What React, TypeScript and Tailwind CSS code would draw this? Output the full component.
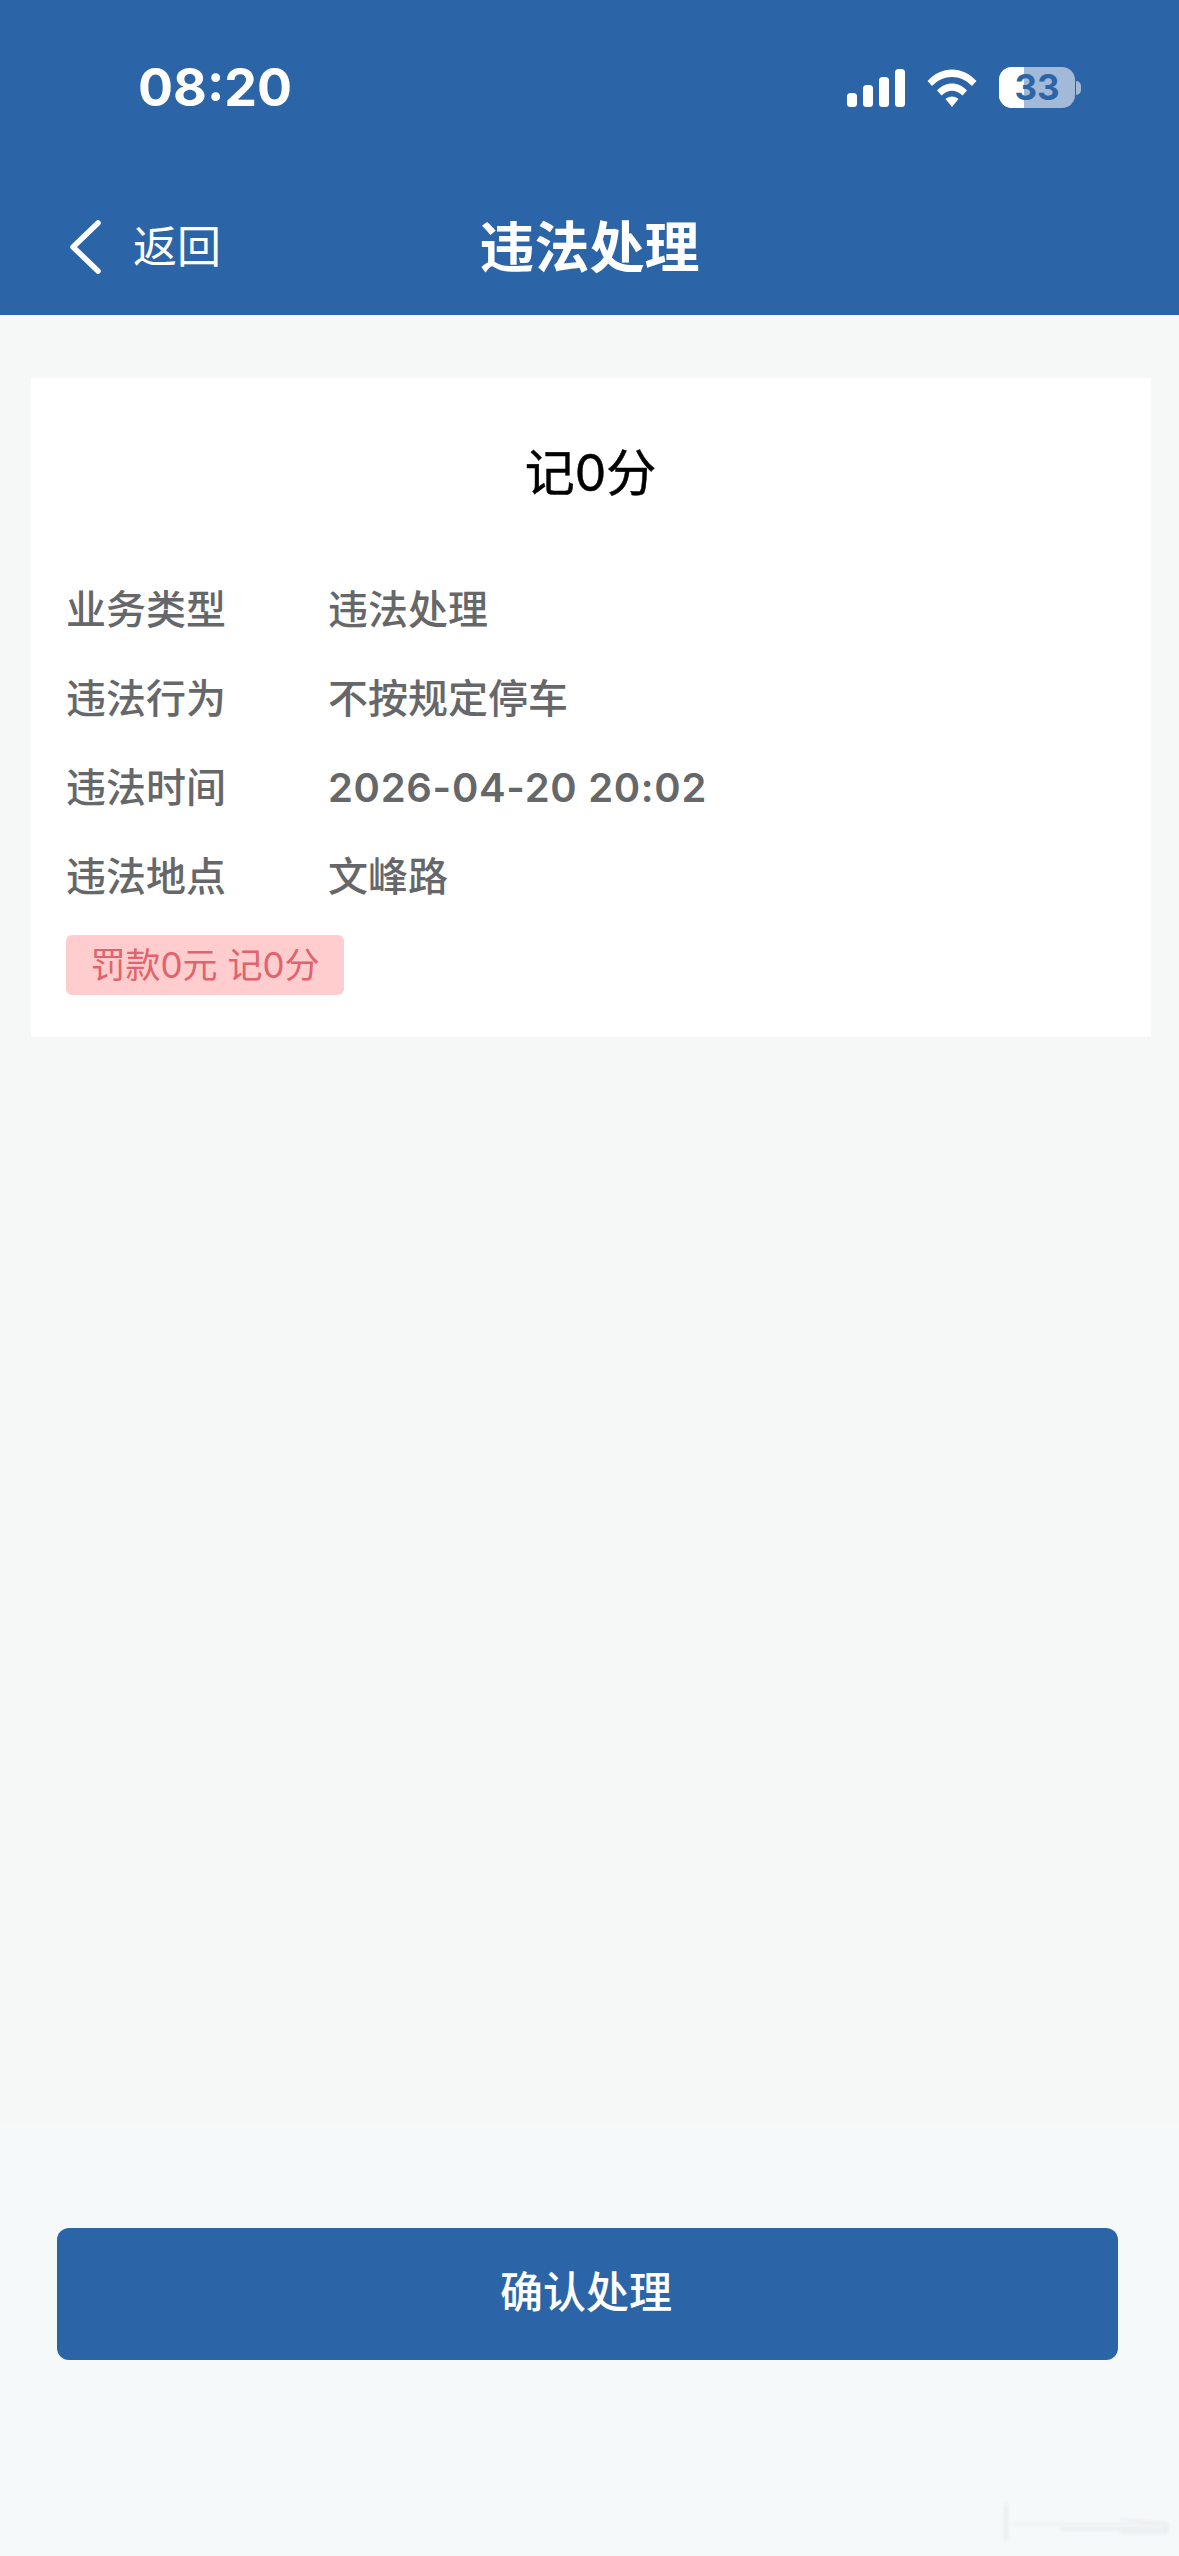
const font = "font-['Inter','Noto_Sans_CJK_SC',sans-serif]";

const rows = [
  ["业务类型", "违法处理", ""],
  ["违法行为", "不按规定停车", ""],
  ["违法时间", "2026-04-20 20:02", "font-semibold tracking-[0.7px]"],
  ["违法地点", "文峰路", ""],
];

function Signal() {
  return (
    <svg width="58" height="38" viewBox="0 0 58 38" fill="#fff">
      <rect x="0" y="24" width="10" height="14" rx="3.5" />
      <rect x="16" y="16" width="10" height="22" rx="3.5" />
      <rect x="32" y="8" width="10" height="30" rx="3.5" />
      <rect x="48" y="0" width="10" height="38" rx="3.5" />
    </svg>
  );
}

function Wifi() {
  return (
    <svg width="50" height="38" viewBox="0 0 50 38" fill="#fff">
      <path d="M0.5 12 C14 -3.5 36 -3.5 49.5 12 L45 17 C33.5 5 16.5 5 5 17 Z" />
      <path d="M10 21.5 C18.5 12 31.5 12 40 21.5 L35.5 26.5 C29 20 21 20 14.5 26.5 Z" />
      <path d="M18.5 30 C22 26.5 28 26.5 31.5 30 L25 38 Z" />
    </svg>
  );
}

function Battery() {
  return (
    <div className="flex items-center">
      <div className="relative w-[76px] h-[41px] rounded-[13px] overflow-hidden bg-[#a3b9d8] flex">
        <div className="w-[25px] h-full bg-white" />
        <span className="absolute inset-0 flex items-center justify-center text-[35px] leading-none font-bold text-[#2c65a7]">
          33
        </span>
      </div>
      <div className="w-[5px] h-[14px] ml-[1px] rounded-r-full bg-[#a3b9d8]" />
    </div>
  );
}

function Watermark() {
  return (
    <svg className="absolute right-0 bottom-0 blur-[1.5px]" width="179" height="56" viewBox="0 0 179 56" fill="none">
      <path d="M6 4 V40" stroke="#e6e9ea" strokeWidth="4" opacity="0.7" />
      <path d="M14 24 H166" stroke="#e8ebec" strokeWidth="3" opacity="0.6" />
      <path d="M60 29 H168" stroke="#e4e7e8" strokeWidth="3" opacity="0.7" />
      <path d="M120 19 L168 24 L166 33 L120 33" stroke="#e2e5e6" strokeWidth="2" opacity="0.6" />
    </svg>
  );
}

export default function App() {
  return (
    <div className={`w-[1179px] h-[2556px] flex flex-col bg-[#f6f7f7] overflow-hidden ${font}`}>
      <header className="h-[315px] bg-[#2c65a7] text-white flex flex-col shrink-0">
        <div className="flex items-center justify-between pt-[67px] pl-[138px] pr-[98px]">
          <span className="text-[52px] leading-[41px] font-bold">08:20</span>
          <div className="flex items-center gap-[22px]">
            <Signal />
            <Wifi />
            <Battery />
          </div>
        </div>
        <div className="grid grid-cols-[1fr_auto_1fr] items-center px-[69px] mt-[112px]">
          <div className="flex items-center gap-[32px]">
            <svg width="32" height="54" viewBox="0 0 32 54" fill="none" stroke="#fff" strokeWidth="5.5" strokeLinecap="round" strokeLinejoin="round">
              <path d="M29 3 L4 27 L29 51" />
            </svg>
            <span className="text-[44px] leading-[54px]">返回</span>
          </div>
          <h1 className="text-[55px] leading-[54px] font-bold text-center whitespace-nowrap">违法处理</h1>
          <div />
        </div>
      </header>

      <main className="flex-1 pl-[31px] pr-[28px] pt-[63px]">
        <section className="h-[659px] bg-white pl-[35px] pr-[36px] pt-[63px] flex flex-col">
          <h2 className="text-[50px] leading-[64px] font-normal text-black text-center [-webkit-text-stroke:0.5px_#000]">记0分</h2>
          <div className="mt-[73px] flex flex-col gap-[25px]">
            {rows.map(([k, v, extra]) => (
              <div key={k} className="flex items-center h-[64px] text-[40px] leading-[64px] font-medium text-[#666769]">
                <span className="w-[262px] shrink-0">{k}</span>
                <span className={extra}>{v}</span>
              </div>
            ))}
          </div>
          <div className="mt-[26px] w-[278px] h-[60px] rounded-[6px] bg-[#ffcdcd] text-[#e0636d] text-[35px] leading-[60px] text-center whitespace-pre">
            罚款0元 记0分
          </div>
        </section>
      </main>

      <footer className="relative h-[432px] shrink-0 bg-[#f6f9fa] px-[57px] pt-[104px]">
        <button className="w-[1061px] h-[132px] rounded-[12px] bg-[#2c65a7] text-white text-[43px] font-medium flex items-center justify-center pb-[4px] pr-[3px]">
          确认处理
        </button>
        <Watermark />
      </footer>
    </div>
  );
}
